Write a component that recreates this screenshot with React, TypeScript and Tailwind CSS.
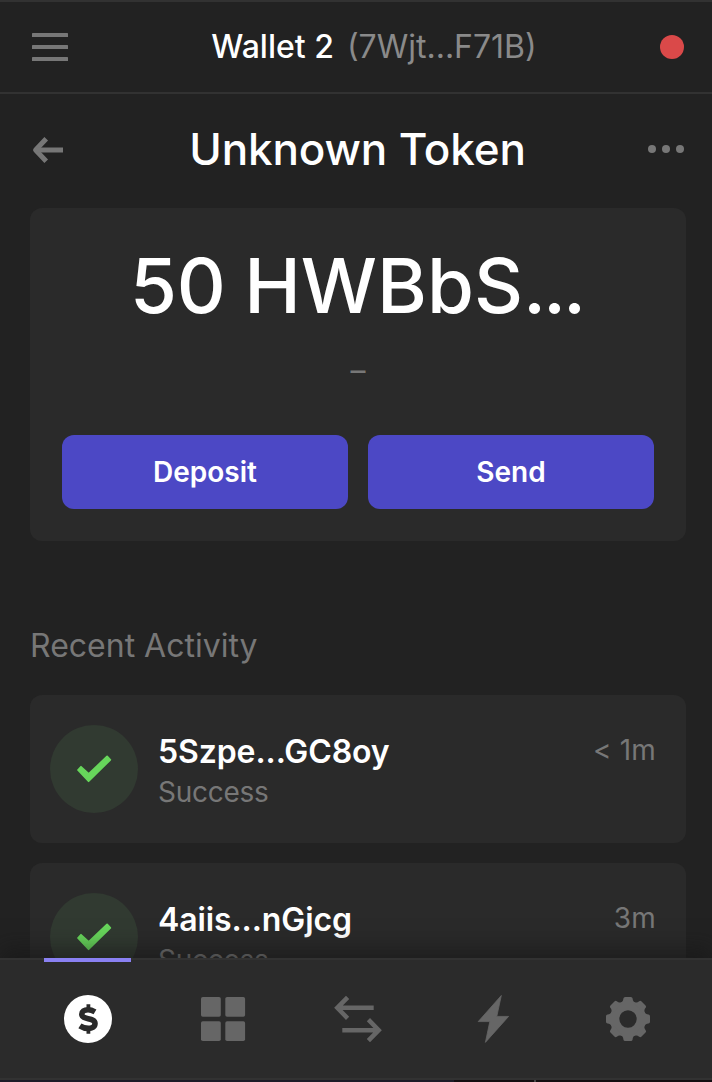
import type { ReactNode } from "react";

function MenuIcon() {
  return (
    <svg width="36" height="28" viewBox="0 0 36 28" fill="#777777">
      <rect width="36" height="4" rx="0.6" />
      <rect y="12" width="36" height="4" rx="0.6" />
      <rect y="24" width="36" height="4" rx="0.6" />
    </svg>
  );
}

function BackIcon() {
  return (
    <svg width="32" height="28" viewBox="0 0 32 28" fill="none" stroke="#777777" strokeWidth="5" strokeLinejoin="round">
      <path d="M14.2 2.8 L3.6 14 L14.2 25.2" />
      <path d="M4 14 H31" />
    </svg>
  );
}

function CheckBadge() {
  return (
    <svg className="shrink-0" width="88" height="88" viewBox="0 0 88 88">
      <circle cx="44" cy="44" r="44" fill="#313a31" />
      <path
        d="M28 45 L31 41.8 L38.7 48.9 L57.1 31.5 L60.3 34.8 L38.6 56.2 Z"
        fill="#67d65b"
        stroke="#67d65b"
        strokeWidth="1.8"
        strokeLinejoin="round"
      />
    </svg>
  );
}

function DollarIcon() {
  return (
    <svg width="48" height="48" viewBox="0 0 48 48" fill="none">
      <circle cx="24" cy="24" r="24" fill="#ffffff" />
      <g stroke="#2a2a2a">
        <path
          d="M31 16.9 C28.4 15.4 26.2 14.8 24 14.8 C20 14.8 17.8 16.6 17.8 19.2 C17.8 25.5 31 21.8 31 28.6 C31 31.8 28.2 33.4 24.3 33.4 C21 33.4 18.3 32.4 15.9 30.8"
          strokeWidth="5.6"
        />
        <path d="M24.4 9.3 V14 M24.4 34 V38.8" strokeWidth="3.8" />
      </g>
    </svg>
  );
}

function GridIcon() {
  return (
    <svg width="48" height="48" viewBox="0 0 48 48" fill="#666666">
      <rect x="2" y="2" width="19.8" height="19.8" rx="1.8" />
      <rect x="26.3" y="2" width="19.8" height="19.8" rx="1.8" />
      <rect x="2" y="26.3" width="19.8" height="19.8" rx="1.8" />
      <rect x="26.3" y="26.3" width="19.8" height="19.8" rx="1.8" />
    </svg>
  );
}

function SwapIcon() {
  return (
    <svg width="48" height="48" viewBox="0 0 48 48" fill="none" stroke="#666666" strokeWidth="4.5">
      <path d="M13.6 2.3 L3.3 12.8 L13.6 23.3 M3 12.8 H39.7" />
      <path d="M34.4 24.7 L44.7 35.2 L34.4 45.7 M45 35.2 H8.3" />
    </svg>
  );
}

function BoltIcon() {
  return (
    <svg width="48" height="48" viewBox="0 0 48 48" fill="#666666" stroke="#666666" strokeWidth="0.8" strokeLinejoin="round">
      <path d="M32.3 0.5 L9.2 26.6 H20.8 L16.4 47.4 L39.6 21.4 H27.8 Z" />
    </svg>
  );
}

const teeth = [0, 45, 90, 135, 180, 225, 270, 315];

function GearIcon() {
  return (
    <svg width="48" height="48" viewBox="0 0 48 48" fill="#666666">
      <circle cx="24" cy="24" r="13.2" fill="none" stroke="#666666" strokeWidth="9" />
      {teeth.map((angle) => (
        <path
          key={angle}
          transform={`rotate(${angle} 24 24)`}
          d="M17 9 V7.4 C18.6 6.7 19.2 5.6 19.4 3.6 Q19.6 2 21.2 2 H26.8 Q28.4 2 28.6 3.6 C28.8 5.6 29.4 6.7 31 7.4 V9 Z"
        />
      ))}
    </svg>
  );
}

function Activity({ name, time }: { name: string; time: string }) {
  return (
    <div className="flex h-[148px] shrink-0 items-center rounded-xl bg-[#2a2a2a] pl-5 pr-[30px]">
      <CheckBadge />
      <div className="ml-5 flex-1 pt-[5px]">
        <div className="flex h-[41px] items-center justify-between">
          <span className="text-[32px] font-semibold tracking-[-0.1px] text-white">{name}</span>
          <span className="pb-[5px] text-[28px] tracking-[0.2px] text-[#777777]">{time}</span>
        </div>
        <div className="-mt-px h-[40px] text-[28px] leading-[40px] tracking-[-0.25px] text-[#777777]">Success</div>
      </div>
    </div>
  );
}

function Tab({ children, active = false }: { children: ReactNode; active?: boolean }) {
  return (
    <button className="relative flex w-[135px] items-center justify-center">
      {active && <span className="absolute -top-[2px] left-[23.5px] h-1 w-[87px] bg-[#8a81f2]" />}
      {children}
    </button>
  );
}

export default function App() {
  return (
    <div className="flex h-[1082px] w-[712px] flex-col overflow-hidden bg-[#222222] font-['Inter',sans-serif]">
      <header className="flex h-[94px] shrink-0 items-center justify-between border-y-2 border-[#323232] pl-8 pr-7">
        <MenuIcon />
        <div className="ml-5 flex gap-[13px] text-[32px] leading-10">
          <span className="font-medium text-white">Wallet 2</span>
          <span className="text-[#8a8a8a]">(7Wjt...F71B)</span>
        </div>
        <span className="h-6 w-6 rounded-full bg-[#da4949]" />
      </header>

      <main className="flex min-h-0 flex-1 flex-col overflow-hidden pl-[30px] pr-[26px]">
        <div className="flex h-[114px] shrink-0 items-center justify-between pb-[3px] pl-[2px]">
          <BackIcon />
          <h1 className="pb-[2px] pl-[3px] text-[44px] font-medium tracking-[-0.15px] text-white">Unknown Token</h1>
          <span className="flex gap-[6px] pb-[2px] pr-[2px]">
            <i className="h-2 w-2 rounded-full bg-[#777777]" />
            <i className="h-2 w-2 rounded-full bg-[#777777]" />
            <i className="h-2 w-2 rounded-full bg-[#777777]" />
          </span>
        </div>

        <section className="flex h-[333px] shrink-0 flex-col items-center rounded-xl bg-[#2a2a2a] px-8 pt-[31px]">
          <div className="h-[92px] pr-[3px] text-[76px] font-medium leading-[92px] text-white [word-spacing:-2px]">
            50 HWBbS<span className="tracking-[-3px]">...</span>
          </div>
          <div className="mt-[19px] h-10 text-[30px] leading-10 text-[#777777]">–</div>
          <div className="mt-[45px] flex w-full gap-5">
            <button className="h-[74px] flex-1 rounded-xl bg-[#4c48c5] text-[28px] font-semibold text-white">Deposit</button>
            <button className="h-[74px] flex-1 rounded-xl bg-[#4c48c5] text-[28px] font-semibold text-white">Send</button>
          </div>
        </section>

        <h2 className="mt-[85px] h-10 shrink-0 text-[32px] leading-10 text-[#777777]">Recent Activity</h2>
        <div className="mt-[29px] flex flex-col gap-5">
          <Activity name="5Szpe...GC8oy" time="< 1m" />
          <Activity name="4aiis...nGjcg" time="3m" />
        </div>
      </main>

      <nav className="relative flex h-[122px] shrink-0 border-y-2 border-[#323232] bg-[#2b2b2b] pl-[20.5px] shadow-[0_-10px_20px_rgba(20,20,20,0.5)]">
        <Tab active>
          <DollarIcon />
        </Tab>
        <Tab>
          <GridIcon />
        </Tab>
        <Tab>
          <SwapIcon />
        </Tab>
        <Tab>
          <BoltIcon />
        </Tab>
        <Tab>
          <GearIcon />
        </Tab>
      </nav>
      <div className="flex h-[2px] shrink-0">
        <span className="w-[454px] bg-[#1f1e2b]" />
        <span className="w-20 bg-[#150f12]" />
        <span className="w-[2px] bg-[#4a4a4a]" />
        <span className="flex-1 bg-[#150f12]" />
      </div>
    </div>
  );
}
